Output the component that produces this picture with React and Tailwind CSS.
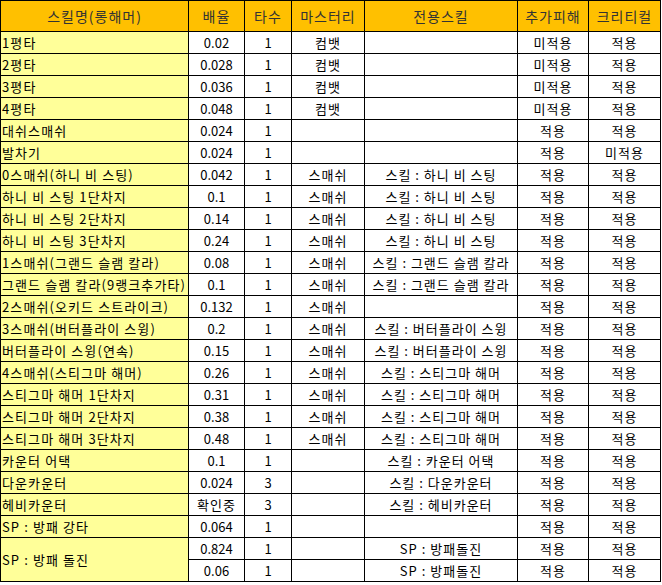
const headers = ["스킬명(롱해머)", "배율", "타수", "마스터리", "전용스킬", "추가피해", "크리티컬"]
const widths = [188, 56, 47, 73, 153, 71, 72]

const rows = [
  ["1평타", "0.02", "1", "컴뱃", "", "미적용", "적용"],
  ["2평타", "0.028", "1", "컴뱃", "", "미적용", "적용"],
  ["3평타", "0.036", "1", "컴뱃", "", "미적용", "적용"],
  ["4평타", "0.048", "1", "컴뱃", "", "미적용", "적용"],
  ["대쉬스매쉬", "0.024", "1", "", "", "적용", "적용"],
  ["발차기", "0.024", "1", "", "", "적용", "미적용"],
  ["0스매쉬(하니 비 스팅)", "0.042", "1", "스매쉬", "스킬 : 하니 비 스팅", "적용", "적용"],
  ["하니 비 스팅 1단차지", "0.1", "1", "스매쉬", "스킬 : 하니 비 스팅", "적용", "적용"],
  ["하니 비 스팅 2단차지", "0.14", "1", "스매쉬", "스킬 : 하니 비 스팅", "적용", "적용"],
  ["하니 비 스팅 3단차지", "0.24", "1", "스매쉬", "스킬 : 하니 비 스팅", "적용", "적용"],
  ["1스매쉬(그랜드 슬램 칼라)", "0.08", "1", "스매쉬", "스킬 : 그랜드 슬램 칼라", "적용", "적용"],
  ["그랜드 슬램 칼라(9랭크추가타)", "0.1", "1", "스매쉬", "스킬 : 그랜드 슬램 칼라", "적용", "적용"],
  ["2스매쉬(오키드 스트라이크)", "0.132", "1", "스매쉬", "", "적용", "적용"],
  ["3스매쉬(버터플라이 스윙)", "0.2", "1", "스매쉬", "스킬 : 버터플라이 스윙", "적용", "적용"],
  ["버터플라이 스윙(연속)", "0.15", "1", "스매쉬", "스킬 : 버터플라이 스윙", "적용", "적용"],
  ["4스매쉬(스티그마 해머)", "0.26", "1", "스매쉬", "스킬 : 스티그마 해머", "적용", "적용"],
  ["스티그마 해머 1단차지", "0.31", "1", "스매쉬", "스킬 : 스티그마 해머", "적용", "적용"],
  ["스티그마 해머 2단차지", "0.38", "1", "스매쉬", "스킬 : 스티그마 해머", "적용", "적용"],
  ["스티그마 해머 3단차지", "0.48", "1", "스매쉬", "스킬 : 스티그마 해머", "적용", "적용"],
  ["카운터 어택", "0.1", "1", "", "스킬 : 카운터 어택", "적용", "적용"],
  ["다운카운터", "0.024", "3", "", "스킬 : 다운카운터", "적용", "적용"],
  ["헤비카운터", "확인중", "3", "", "스킬 : 헤비카운터", "적용", "적용"],
  ["SP : 방패 강타", "0.064", "1", "", "", "적용", "적용"],
]

// last skill spans two sub-rows
const spRows = [
  ["0.824", "1", "", "SP : 방패돌진", "적용", "적용"],
  ["0.06", "1", "", "SP : 방패돌진", "적용", "적용"],
]

const cell = "border border-black text-center p-0 leading-none"
const wide = "border border-black text-center p-0 leading-none tracking-[1px]"
const nameCell = "border border-black bg-[#ffff99] text-left pl-px p-0 leading-none tracking-[1.1px]"

// numbers stay tight, korean text gets the wider Malgun-like spacing
const cls = (i) => (i < 2 ? cell : wide)

export default function App() {
  return (
    <div
      className="w-[662px] h-[585px] bg-white text-[13px] text-black overflow-hidden"
      style={{ fontFamily: '"Noto Sans CJK KR", "Noto Sans", sans-serif' }}
    >
      <table className="border-collapse table-fixed w-[661px]">
        <colgroup>
          {widths.map((w, i) => (
            <col key={i} style={{ width: w }} />
          ))}
        </colgroup>
        <thead>
          <tr className="h-[31px] bg-[#ffc000]">
            {headers.map((h) => (
              <th key={h} className="border border-black font-normal text-[#333] text-[14px] tracking-[1px] p-0">
                {h}
              </th>
            ))}
          </tr>
        </thead>
        <tbody>
          {rows.map((r) => (
            <tr key={r[0]} className="h-[22px]">
              <td className={nameCell}>{r[0]}</td>
              {r.slice(1).map((v, i) => (
                <td key={i} className={v === "확인중" ? wide : cls(i)}>{v}</td>
              ))}
            </tr>
          ))}
          {spRows.map((r, idx) => (
            <tr key={idx} className="h-[22px]">
              {idx === 0 && (
                <td rowSpan={2} className={nameCell}>SP : 방패 돌진</td>
              )}
              {r.map((v, i) => (
                <td key={i} className={cls(i)}>{v}</td>
              ))}
            </tr>
          ))}
        </tbody>
      </table>
    </div>
  )
}
